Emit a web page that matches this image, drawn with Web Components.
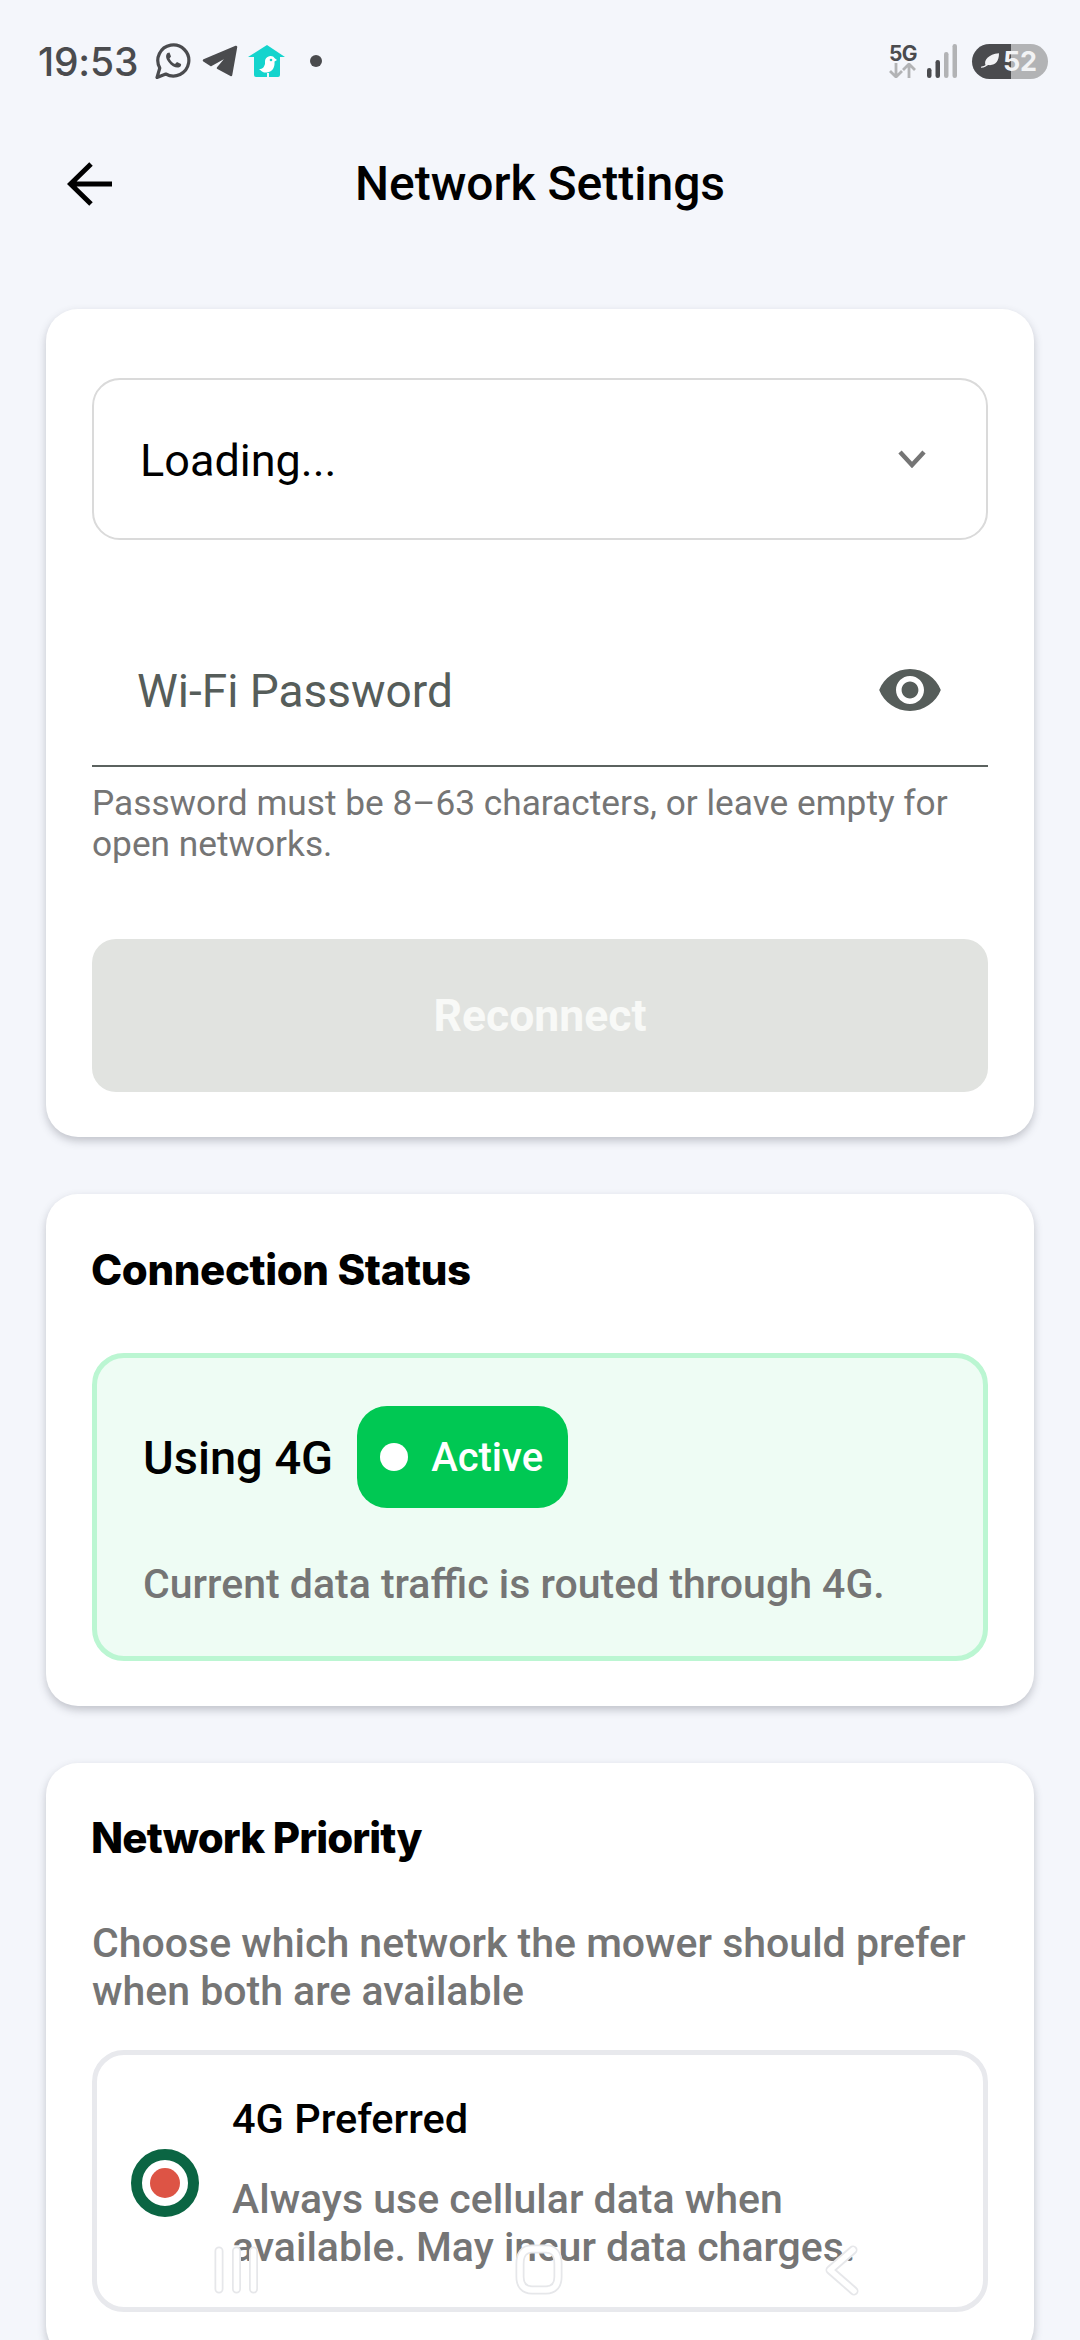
<!DOCTYPE html>
<html lang="en">
<head>
<meta charset="utf-8">
<title>Network Settings</title>
<style>
  html, body { margin: 0; padding: 0; background: #f4f6fb; }
  body { width: 1080px; height: 2340px; overflow: hidden; position: relative; font-family: Roboto, "Liberation Sans", sans-serif; }
</style>
</head>
<body>
  <status-bar></status-bar>
  <app-header>Network Settings</app-header>
  <main-list>
    <setting-card top="69" bottom="45">
      <network-select>Loading...</network-select>
      <password-field label="Wi-Fi Password" hint="Password must be 8–63 characters, or leave empty for open networks."></password-field>
      <reconnect-button>Reconnect</reconnect-button>
    </setting-card>
    <setting-card top="50" bottom="45">
      <card-title style="letter-spacing:-0.380px">Connection Status</card-title>
      <status-box name="Using 4G" state="Active">Current data traffic is routed through 4G.</status-box>
    </setting-card>
    <setting-card top="49" bottom="46">
      <card-title style="letter-spacing:-0.850px">Network Priority</card-title>
      <card-note>Choose which network the mower should prefer when both are available</card-note>
      <priority-option label="4G Preferred">Always use cellular data when available. May incur data charges.</priority-option>
    </setting-card>
  </main-list>
  <nav-overlay></nav-overlay>

<script>
function define(name, html, init) {
  customElements.define(name, class extends HTMLElement {
    connectedCallback() {
      if (this.shadowRoot) return;
      const template = document.createElement('template');
      template.innerHTML = html;
      this.attachShadow({ mode: 'open' });
      this.shadowRoot.appendChild(template.content.cloneNode(true));
      if (init) init(this, this.shadowRoot);
    }
  });
}

define('status-bar', `
  <style>
    :host { display: flex; align-items: center; height: 122px; padding: 0 32px 0 38px; box-sizing: border-box; color: #4a4b4e; }
    .time { font: 500 39px/1 Inter, Roboto, sans-serif; letter-spacing: -0.2px; margin-right: 17px; }
    .left { display: flex; align-items: center; }
    .right { display: flex; align-items: center; margin-left: auto; }
    svg { display: block; }
    .net { display: flex; flex-direction: column; align-items: center; margin-right: 9px; width: 30px; }
    .net b { font: 700 21px/19px Inter, Roboto, sans-serif; letter-spacing: -0.5px; }
    .batt { position: relative; width: 76px; height: 35px; border-radius: 18px; margin-left: 15px; overflow: hidden; background: linear-gradient(90deg, #4a4b4e 0 51%, #b2b3b5 51% 100%); }
    .batt span { position: absolute; left: 31px; top: 0; font: 700 27px/35px Inter, Roboto, sans-serif; color: #f2f3f5; letter-spacing: -0.3px; }
    .batt svg { position: absolute; left: 9px; top: 9px; }
  </style>
  <div class="left">
    <span class="time">19:53</span>
    <svg width="36" height="36" viewBox="0 0 36 36" style="margin-right:11px"><path d="M2 34.500l2.800-9.500a15.500 15.500 0 1 1 6 6z" fill="none" stroke="#4a4b4e" stroke-width="3.200" stroke-linejoin="round"/><path d="M12.500 10c-2 2-2 5 1 9s7 6 10 5.500c2-.5 3-2 2.500-3.500l-4-2-2 2c-2-.5-4.500-3-5.500-5.500l1.500-2-1.500-4z" fill="#4a4b4e"/></svg>
    <svg width="36" height="32" viewBox="0 0 36 32" style="margin-right:10px"><path d="M2 15.500L34 2 29 30 16 23 27 10 9 20z" fill="#4a4b4e" stroke="#4a4b4e" stroke-linejoin="round" stroke-width="2.500"/></svg>
    <svg width="38" height="32" viewBox="0 0 38 32" style="margin-right:24px"><path d="M19 0l18 12h-5v18a2 2 0 0 1-2 2H21v-4h-2v4H8a2 2 0 0 1-2-2V12H0z" fill="#14d4cd"/><path d="M11 24c4 0 5-2 6-5v-3a5.500 5.500 0 0 1 10-2.500l2 1.500-2.500 1.500c.5 6-2 10-7.500 11h-3l-2-1z" fill="#fff"/><circle cx="23" cy="15" r="1.300" fill="#14d4cd"/></svg>
    <svg width="12" height="12" viewBox="0 0 12 12"><circle cx="6" cy="6" r="6" fill="#4a4b4e"/></svg>
  </div>
  <div class="right">
    <div class="net"><b>5G</b>
      <svg width="30" height="15" viewBox="0 0 30 15" fill="none" stroke="#b2b3b5" stroke-width="2.800"><path d="M8 0v13M2 8l6 6 6-6M21 15V2M15 7l6-6 6 6"/></svg>
    </div>
    <svg width="30" height="34" viewBox="0 0 30 34" fill="#4a4b4e"><rect x="0" y="24" width="4.500" height="10" rx="2.200"/><rect x="8.500" y="16" width="4.500" height="18" rx="2.200"/><rect x="17" y="8" width="4.500" height="26" rx="2.200" fill="#b2b3b5"/><rect x="25.500" y="0" width="4.500" height="34" rx="2.200" fill="#b2b3b5"/></svg>
    <div class="batt">
      <svg width="18" height="16" viewBox="0 0 20 17"><path d="M0 15c3-1 4-1 5-2C3 8 8 1 20 0c0 9-4 14-12 13-2 1-4 3-8 3z" fill="#f2f3f5"/></svg>
      <span>52</span>
    </div>
  </div>
`);

define('app-header', `
  <style>
    :host { display: flex; align-items: center; justify-content: center; position: relative; height: 122px; }
    h1 { margin: 2px 0 0; font: 500 48px/1.2 Roboto, sans-serif; color: #000; }
    button { position: absolute; left: 67px; top: 39px; width: 46px; height: 46px; padding: 0; border: 0; background: none; }
  </style>
  <button aria-label="Back">
    <svg width="46" height="46" viewBox="0 0 46 46" fill="none" stroke="#000" stroke-width="5"><path d="M45 23H4M24 3L3.500 23 24 43"/></svg>
  </button>
  <h1><slot></slot></h1>
`);

define('main-list', `
  <style>
    :host { display: flex; flex-direction: column; gap: 57px; padding: 0 46px; margin-top: 65px; }
  </style>
  <slot></slot>
`);

define('setting-card', `
  <style>
    :host { display: block; background: #fff; border-radius: 32px; box-shadow: 0 4px 8px rgba(60, 64, 80, .28); }
    .in { display: flex; flex-direction: column; padding: 46px; }
  </style>
  <div class="in"><slot></slot></div>
`, (el, root) => {
  root.querySelector('.in').style.padding = `${el.getAttribute('top')}px 46px ${el.getAttribute('bottom')}px`;
});

define('network-select', `
  <style>
    :host { display: flex; align-items: center; justify-content: space-between; height: 162px; box-sizing: border-box; border: 2.500px solid #dadada; border-radius: 28px; padding: 3px 60px 0 46px; font: 400 45px Roboto, sans-serif; color: #000; }
    svg { display: block; margin-top: -3px; }
  </style>
  <span><slot></slot></span>
  <svg width="28" height="18" viewBox="0 0 28 18" fill="none" stroke="#757575" stroke-width="4.500"><path d="M2 2l12 13L26 2"/></svg>
`);

define('password-field', `
  <style>
    :host { display: block; margin-top: 75px; }
    .row { display: flex; align-items: center; justify-content: space-between; height: 150px; padding: 0 47px 0 45px; border-bottom: 2px solid #5b625f; font: 400 46px Roboto, sans-serif; color: #565d5a; }
    .label { padding-top: 2px; }
    .hint { margin: 16px 0 0; font: 400 35.250px/41px Roboto, sans-serif; color: #757575; }
    svg { display: block; }
  </style>
  <div class="row"><span class="label"></span>
    <svg width="62" height="42" viewBox="1 4.500 22 15"><path fill="#565d5a" d="M12 4.500C7 4.500 2.730 7.610 1 12c1.730 4.390 6 7.500 11 7.500s9.270-3.110 11-7.500c-1.730-4.390-6-7.500-11-7.500zM12 17c-2.760 0-5-2.240-5-5s2.240-5 5-5 5 2.240 5 5-2.240 5-5 5zm0-8c-1.660 0-3 1.340-3 3s1.340 3 3 3 3-1.340 3-3-1.340-3-3-3z"/></svg>
  </div>
  <p class="hint"></p>
`, (el, root) => {
  root.querySelector('.label').textContent = el.getAttribute('label');
  root.querySelector('.hint').textContent = el.getAttribute('hint');
});

define('reconnect-button', `
  <style>
    :host { display: flex; align-items: center; justify-content: center; height: 153px; margin-top: 74px; border-radius: 24px; background: #e1e3e0; color: #f8f9f7; font: 700 44.500px Roboto, sans-serif; }
  </style>
  <slot></slot>
`);

define('card-title', `
  <style>
    :host { display: block; margin-left: -1px; font: 800 42px/52px Inter, "Open Sans", sans-serif; color: #000; letter-spacing: -0.200px; }
  </style>
  <slot></slot>
`);

define('status-box', `
  <style>
    :host { display: block; margin-top: 57px; background: #eefcf4; border: 5px solid #bbf6d2; border-radius: 32px; padding: 48px 46px 48px 46px; }
    .top { display: flex; align-items: center; gap: 24px; }
    .name { font: 500 47px Roboto, sans-serif; color: #000; }
    .pill { display: flex; align-items: center; gap: 23px; height: 102px; padding: 0 25px 0 23px; box-sizing: border-box; background: #00c853; border-radius: 30px; color: #fff; font: 500 40px Roboto, sans-serif; }
    .pill i { width: 28px; height: 28px; border-radius: 50%; background: #fff; }
    p { margin: 52px 0 0; font: 500 41px/48px Roboto, sans-serif; color: #757575; }
  </style>
  <div class="top"><span class="name"></span><span class="pill"><i></i><span class="state"></span></span></div>
  <p><slot></slot></p>
`, (el, root) => {
  root.querySelector('.name').textContent = el.getAttribute('name');
  root.querySelector('.state').textContent = el.getAttribute('state');
});

define('card-note', `
  <style>
    :host { display: block; margin-top: 55px; font: 500 41px/48px Roboto, sans-serif; color: #757575; }
  </style>
  <slot></slot>
`);

define('priority-option', `
  <style>
    :host { display: flex; align-items: center; margin-top: 35px; border: 5px solid #e8e9ed; border-radius: 32px; padding: 40px 30px 36px 34px; gap: 33px; }
    .radio { flex: none; width: 68px; height: 68px; box-sizing: border-box; border: 11px solid #0b6543; border-radius: 50%; display: flex; align-items: center; justify-content: center; }
    .radio i { width: 30px; height: 30px; border-radius: 50%; background: #dd5445; }
    h4 { margin: 0; font: 500 41.500px/48px Roboto, sans-serif; color: #000; }
    p { margin: 32px 0 0; font: 500 41px/48px Roboto, sans-serif; color: #757575; }
  </style>
  <span class="radio"><i></i></span>
  <div><h4></h4><p><slot></slot></p></div>
`, (el, root) => {
  root.querySelector('h4').textContent = el.getAttribute('label');
});

define('nav-overlay', `
  <style>
    :host { position: absolute; left: 0; right: 0; top: 2240px; height: 60px; }
    svg { position: absolute; left: 0; top: 0; }
    .edge { stroke: #e6e7ea; stroke-width: 9; }
    .core { stroke: #fff; stroke-width: 5.500; }
  </style>
  <svg width="1080" height="60" viewBox="0 0 1080 60" fill="none" stroke-linecap="round" stroke-linejoin="round">
    <path class="edge" d="M219 11v38M236.500 11v38M253.500 11v38"/>
    <path class="core" d="M219 11v38M236.500 11v38M253.500 11v38"/>
    <path class="edge" d="M520 24c0-10 4-15 12-15h14c8 0 12 5 12 15v13c0 8-4 13-12 13h-14c-8 0-12-5-12-13z"/>
    <path class="core" d="M520 24c0-10 4-15 12-15h14c8 0 12 5 12 15v13c0 8-4 13-12 13h-14c-8 0-12-5-12-13z"/>
    <path class="edge" d="M853 10L830 30l24 21"/>
    <path class="core" d="M853 10L830 30l24 21"/>
  </svg>
`);
</script>
</body>
</html>
